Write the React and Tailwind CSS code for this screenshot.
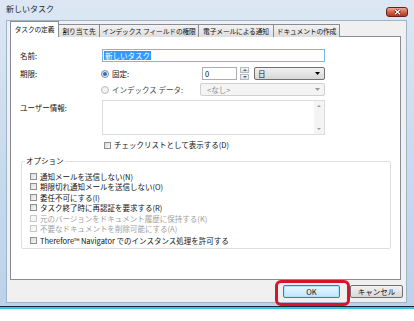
import React from 'react';

const Check = ({ disabled }) => (
  <span
    className={`inline-block w-[7px] h-[7px] border shrink-0 ${
      disabled ? 'border-[#c8c8c8] bg-[#f6f6f6]' : 'border-[#8e8f8f] bg-gradient-to-br from-[#dcdcdc] to-[#f8f8f8]'
    }`}
  />
);

const Radio = ({ checked, disabled }) => (
  <span
    className={`inline-flex items-center justify-center w-[8px] h-[8px] rounded-full border shrink-0 ${
      disabled ? 'border-[#bcbcbc] bg-[#f2f2f2]' : 'border-[#7f8a96] bg-gradient-to-br from-[#dfe4ea] to-white'
    }`}
  >
    {checked && <span className="w-[4px] h-[4px] rounded-full bg-[#2a6fc9]" />}
  </span>
);

const Arrow = ({ color = '#000' }) => (
  <svg width="5" height="3" viewBox="0 0 5 3">
    <path d="M0 0h5L2.5 3z" fill={color} />
  </svg>
);

const tabs = [
  { label: 'タスクの定義', w: 'w-[49px]', active: true },
  { label: '割り当て先', w: 'w-[41px]' },
  { label: 'インデックス フィールドの権限', w: 'w-[99px]' },
  { label: '電子メールによる通知', w: 'w-[75px]' },
  { label: 'ドキュメントの作成', w: 'w-[66px]' },
];

const options = [
  { label: '通知メールを送信しない(N)' },
  { label: '期限切れ通知メールを送信しない(O)' },
  { label: '委任不可にする(I)' },
  { label: 'タスク終了時に再認証を要求する(R)' },
  { label: '元のバージョンをドキュメント履歴に保持する(K)', disabled: true },
  { label: '不要なドキュメントを削除可能にする(A)', disabled: true },
  { label: 'Therefore™ Navigator でのインスタンス処理を許可する' },
];

export default function App() {
  return (
    <div className="relative w-[414px] h-[321px] bg-white font-['Noto_Sans_CJK_JP',sans-serif] text-[7.5px] leading-none text-[#111] overflow-hidden">
      {/* window */}
      <div className="h-[309px] flex flex-col bg-gradient-to-b from-[#dce7f3] via-[#c9dbee] to-[#bcd2ea] border-b-2 border-b-[#2fc6ea] shadow-[inset_0_-1px_0_#1b2a3a]">
        <div className="h-[20px] flex items-start justify-between shrink-0">
          <span className="pl-[6px] pt-[5px] text-[8px] text-[#1c2530]">新しいタスク</span>
          <div className="mt-[7px] mr-[6px] w-[22px] h-[10px] rounded-[3px] border border-[#6b2118] bg-gradient-to-b from-[#e9a99a] via-[#d0644f] to-[#b8331d] flex items-center justify-center">
            <svg width="7" height="6" viewBox="0 0 7 6">
              <path d="M1 0.8L6 5.2M6 0.8L1 5.2" stroke="#4a1208" strokeWidth="2.4" />
              <path d="M1 0.8L6 5.2M6 0.8L1 5.2" stroke="#fff" strokeWidth="1.3" />
            </svg>
          </div>
        </div>

        {/* client area */}
        <div className="ml-[6px] w-[401px] h-[283px] bg-[#f0f0f0] border border-[#9fb3c9] flex flex-col">
          <div className="pl-[3px] flex items-end h-[16px] relative z-10 -mb-[1px] text-[6.8px] whitespace-nowrap tracking-[-0.2px]">
            {tabs.map((t) =>
              t.active ? (
                <div key={t.label} className={`${t.w} h-[16px] bg-white border border-b-0 border-[#898c95] flex items-center justify-center pb-[1px]`}>
                  {t.label}
                </div>
              ) : (
                <div key={t.label} className={`${t.w} h-[13px] bg-gradient-to-b from-[#f2f2f2] to-[#dedede] border border-b-0 border-l-0 border-[#898c95] flex items-center justify-center overflow-hidden`}>
                  {t.label}
                </div>
              )
            )}
          </div>

          {/* tab panel */}
          <div className="ml-[3px] w-[391px] h-[244px] bg-white border border-[#898c95] flex flex-col">
            <div className="mt-[12px] flex items-center h-[13px]">
              <span className="w-[91px] pl-[9px]">名前:</span>
              <div className="w-[223px] h-[13px] border border-[#7eb4ea] flex items-center pl-[1px]">
                <span className="bg-[#3399ff] text-white px-[1px] py-[1px]">新しいタスク</span>
              </div>
            </div>

            <div className="mt-[5px] flex items-center h-[13px]">
              <span className="w-[90px] pl-[9px]">期限:</span>
              <div className="w-[101px] flex items-center gap-[3px]">
                <Radio checked />
                <span>固定:</span>
              </div>
              <div className="w-[35px] h-[13px] border border-[#abadb3] flex items-center pl-[2px]">0</div>
              <div className="ml-[3px] w-[9px] h-[13px] flex flex-col gap-[1px]">
                <div className="flex-1 border border-[#b4b9c1] bg-gradient-to-b from-[#f4f6f8] to-[#dde3ea] flex items-center justify-center">
                  <svg width="4" height="2" viewBox="0 0 4 2"><path d="M0 2h4L2 0z" fill="#4d6185" /></svg>
                </div>
                <div className="flex-1 border border-[#b4b9c1] bg-gradient-to-b from-[#f4f6f8] to-[#dde3ea] flex items-center justify-center">
                  <svg width="4" height="2" viewBox="0 0 4 2"><path d="M0 0h4L2 2z" fill="#4d6185" /></svg>
                </div>
              </div>
              <div className="ml-[5px] w-[71px] h-[13px] rounded-[2px] border border-[#707070] bg-gradient-to-b from-[#f2f2f2] to-[#d6d6d6] flex items-center justify-between pl-[3px] pr-[4px]">
                <span>日</span>
                <Arrow />
              </div>
            </div>

            <div className="mt-[3px] flex items-center h-[13px]">
              <span className="w-[90px]" />
              <div className="w-[99px] flex items-center gap-[3px] text-[#444] whitespace-nowrap">
                <Radio disabled />
                <span>インデックス データ:</span>
              </div>
              <div className="w-[125px] h-[13px] rounded-[2px] border border-[#d0d0d0] bg-[#f4f4f4] flex items-center justify-between pl-[6px] pr-[4px] text-[#8d8d8d]">
                <span>&lt;なし&gt;</span>
                <Arrow color="#9a9a9a" />
              </div>
            </div>

            <div className="mt-[4px] flex items-start">
              <span className="w-[91px] pl-[9px] pt-[4px]">ユーザー情報:</span>
              <div className="w-[223px] h-[35px] border border-[#dcdcdc] flex justify-end">
                <div className="w-[10px] h-full bg-[#f4f4f4] flex flex-col items-center justify-between py-[4px]">
                  <svg width="4" height="2" viewBox="0 0 4 2"><path d="M0 2h4L2 0z" fill="#a0a0a0" /></svg>
                  <svg width="4" height="2" viewBox="0 0 4 2"><path d="M0 0h4L2 2z" fill="#a0a0a0" /></svg>
                </div>
              </div>
            </div>

            <div className="mt-[6px] pl-[93px] flex items-center gap-[3px] h-[8px]">
              <Check />
              <span>チェックリストとして表示する(D)</span>
            </div>

            <div className="mt-[12px] ml-[10px] w-[370px] h-[88px] border border-[#dcdfe3] rounded-[2px] relative">
              <span className="absolute -top-[5px] left-[3px] bg-white px-[1px]">オプション</span>
              <div className="pt-[9px] pl-[8px] flex flex-col whitespace-nowrap">
                {options.map((o, i) => (
                  <div
                    key={o.label}
                    className={`h-[10.5px] flex items-center gap-[3px] ${i === 6 ? 'mt-[1.5px]' : ''} ${o.disabled ? 'text-[#a0a0a0]' : ''}`}
                  >
                    <Check disabled={o.disabled} />
                    <span>{o.label}</span>
                  </div>
                ))}
              </div>
            </div>
          </div>

          {/* buttons */}
          <div className="mt-[5px] pr-[3px] flex justify-end gap-[10px]">
            <div className="w-[57px] h-[13px] rounded-[2px] border border-[#3c7fb1] bg-gradient-to-b from-[#eaf6fd] to-[#bee6fd] shadow-[inset_0_0_0_1px_#aee5fb] flex items-center justify-center">
              OK
            </div>
            <div className="w-[53px] h-[13px] rounded-[2px] border border-[#707070] bg-gradient-to-b from-[#f2f2f2] to-[#d8d8d8] flex items-center justify-center">
              キャンセル
            </div>
          </div>
        </div>
      </div>

      {/* highlight around OK */}
      <div className="absolute left-[275px] top-[280px] w-[75px] h-[26px] rounded-[6px] border-[3px] border-[#d6142c]" />
    </div>
  );
}
